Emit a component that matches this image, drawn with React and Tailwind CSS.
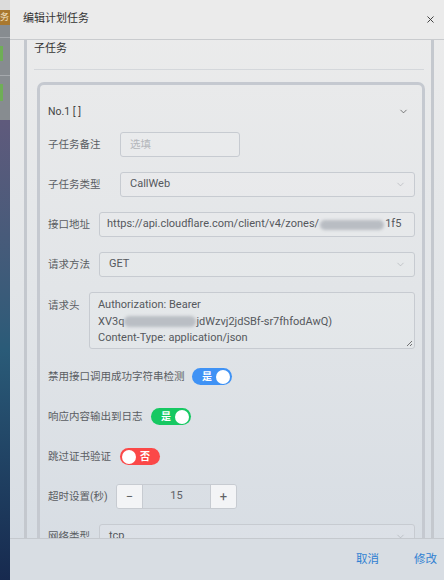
import React from "react";
import { X, ChevronDown } from "lucide-react";

const font = { fontFamily: 'Roboto, "Noto Sans CJK SC", sans-serif' };

const Label = ({ children, className = "" }) => (
  <span className={`shrink-0 text-[10.5px] text-[#5a5d62] ${className}`}>{children}</span>
);

const Select = ({ value, className = "" }) => (
  <div
    className={`flex h-[25px] items-center justify-between rounded-[3px] border border-[#c7cbd1] bg-white/10 pl-[9px] pr-[8px] text-[11px] text-[#55585d] ${className}`}
  >
    <span>{value}</span>
    <ChevronDown size={11} strokeWidth={1.2} className="text-[#a3a7ad]" />
  </div>
);

const Toggle = ({ on, color, text }) => (
  <div
    className={`flex h-[17px] w-[40px] items-center rounded-full px-[2px] ${color} ${
      on ? "justify-between pl-[10px]" : "justify-between pr-[10px]"
    }`}
  >
    {on ? (
      <>
        <span className="text-[10px] font-bold leading-none text-white">{text}</span>
        <span className="h-[14px] w-[14px] rounded-full bg-white" />
      </>
    ) : (
      <>
        <span className="h-[14px] w-[14px] rounded-full bg-white" />
        <span className="text-[10px] font-bold leading-none text-white">{text}</span>
      </>
    )}
  </div>
);

const Row = ({ children, className = "" }) => (
  <div className={`mb-[15px] flex h-[25px] items-center ${className}`}>{children}</div>
);

export default function App() {
  return (
    <div className="flex h-[580px] w-[444px] overflow-hidden" style={font}>
      {/* page behind the dialog */}
      <div className="flex w-[10px] shrink-0 flex-col">
        <div className="h-[10px] bg-[#dcdcdc]" />
        <div className="h-[15px] bg-[#a9782f] text-[9px] leading-[15px] text-[#f3e3c6]">务</div>
        <div className="flex h-[95px] flex-col bg-[#878c90]">
          <div className="mt-[12px] h-px bg-[#a5a9ad]" />
          <div className="mt-[8px] h-[15px] w-[3px] bg-[#6fae56]" />
          <div className="mt-[14px] h-px bg-[#a5a9ad]" />
          <div className="mt-[8px] h-[17px] w-[3px] bg-[#6fae56]" />
        </div>
        <div className="flex-1 bg-gradient-to-b from-[#5f5a7c] via-[#2a5b78] to-[#172a4f]" />
      </div>

      {/* dialog */}
      <div className="relative flex flex-1 flex-col bg-gradient-to-b from-[#ececec] via-[#e2e5e8] to-[#d6dce3]">
        <div className="flex h-[40px] shrink-0 items-center justify-between border-b border-[#c9cbce] bg-[#ebebeb] pl-[13px] pr-[8px]">
          <span className="text-[11px] text-[#333]">编辑计划任务</span>
          <X size={11} strokeWidth={2} className="text-[#333]" />
        </div>

        <div className="min-h-0 flex-1 overflow-hidden pb-[42px] pl-[14px] pr-[10px]">
          <div className="h-full border-x-[3px] border-[#c4c8ce] pl-[7px] pr-[7px]">
            <div className="h-[17px] text-[11px] leading-[17px] text-[#333]">子任务</div>
            <div className="mt-[12px] border-t border-[#d4d7db]" />
            <div className="ml-[3px] mr-[-1px] mt-[12px] h-[600px] rounded-tl-[7px] rounded-tr-[7px] border-x-[3px] border-t-[3px] border-[#c5c9d0] pl-[8px] pr-[7px]">
              <div className="flex h-[47px] items-center justify-between pr-[6px] pt-[6px]">
                <span className="text-[10.5px] text-[#444]">No.1 [ ]</span>
                <ChevronDown size={11} strokeWidth={1.5} className="text-[#444]" />
              </div>

              <Row>
                <Label className="w-[72px]">子任务备注</Label>
                <div className="flex h-[25px] w-[120px] items-center rounded-[3px] border border-[#c7cbd1] bg-white/10 pl-[9px] text-[10.5px] text-[#b4b7bb]">
                  选填
                </div>
              </Row>

              <Row>
                <Label className="w-[72px]">子任务类型</Label>
                <Select value="CallWeb" className="flex-1" />
              </Row>

              <Row>
                <Label className="w-[51px]">接口地址</Label>
                <div className="flex h-[25px] flex-1 items-center overflow-hidden whitespace-nowrap rounded-[3px] border border-[#c7cbd1] bg-white/10 pl-[7px] text-[11px] text-[#55585d]">
                  <span>https://api.cloudflare.com/client/v4/zones/</span>
                  <span className="mx-[1px] inline-block h-[10px] w-[64px] rounded-full bg-[#b9bdc3] blur-[1.5px]" />
                  <span>1f5</span>
                </div>
              </Row>

              <Row>
                <Label className="w-[51px]">请求方法</Label>
                <Select value="GET" className="flex-1" />
              </Row>

              <div className="mb-[15px] flex">
                <Label className="w-[41px] pt-[6px]">请求头</Label>
                <div className="relative h-[57px] flex-1 rounded-[3px] border border-[#c7cbd1] bg-white/10 pl-[8px] pt-[4px] text-[11px] leading-[16.5px] text-[#55585d]">
                  <div>Authorization: Bearer</div>
                  <div className="flex items-center whitespace-nowrap">
                    <span>XV3q</span>
                    <span className="inline-block h-[11px] w-[72px] rounded-full bg-[#babec4] blur-[1.5px]" />
                    <span>jdWzvj2jdSBf-sr7fhfodAwQ)</span>
                  </div>
                  <div>Content-Type: application/json</div>
                  <svg className="absolute bottom-[1px] right-[1px]" width="7" height="7" viewBox="0 0 7 7">
                    <path d="M6 1 L1 6 M6 4 L4 6" stroke="#555" strokeWidth="0.8" />
                  </svg>
                </div>
              </div>

              <Row>
                <Label className="w-[144px]">禁用接口调用成功字符串检测</Label>
                <Toggle on color="bg-[#3f92f5]" text="是" />
              </Row>

              <Row>
                <Label className="w-[103px]">响应内容输出到日志</Label>
                <Toggle on color="bg-[#16c862]" text="是" />
              </Row>

              <Row>
                <Label className="w-[72px]">跳过证书验证</Label>
                <Toggle on={false} color="bg-[#fb4848]" text="否" />
              </Row>

              <Row>
                <Label className="w-[68px]">超时设置(秒)</Label>
                <div className="flex h-[25px] w-[121px] overflow-hidden rounded-[3px] border border-[#c7cbd1] text-[#5f6266]">
                  <div className="flex w-[26px] items-center justify-center border-r border-[#c7cbd1] bg-[#f3f4f6] text-[13px]">
                    −
                  </div>
                  <div className="flex flex-1 items-center justify-center text-[11px]">15</div>
                  <div className="flex w-[26px] items-center justify-center border-l border-[#c7cbd1] bg-[#f3f4f6] text-[13px]">
                    +
                  </div>
                </div>
              </Row>

              <Row>
                <Label className="w-[51px]">网络类型</Label>
                <Select value="tcp" className="flex-1" />
              </Row>
            </div>
          </div>
        </div>

        <div className="absolute bottom-0 left-0 right-0 flex h-[42px] items-center justify-end gap-[35px] border-t border-[#c5c9ce] bg-[#d8dde3] pr-[7px]">
          <span className="text-[11.5px] text-[#2f7fd2]">取消</span>
          <span className="text-[11.5px] text-[#2f7fd2]">修改</span>
        </div>
      </div>
    </div>
  );
}
